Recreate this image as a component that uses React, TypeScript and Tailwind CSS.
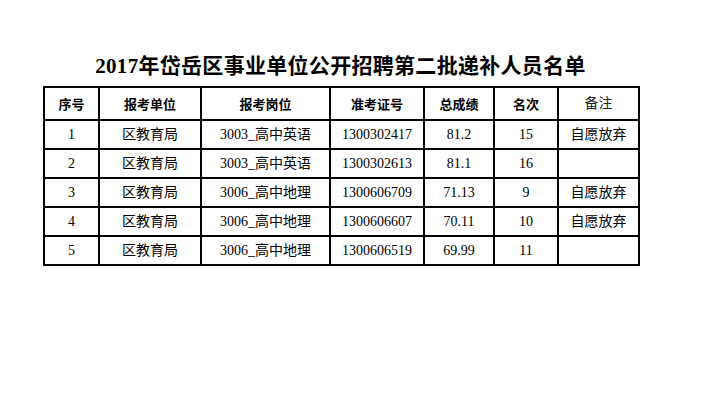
const rows = [
  ['1', '区教育局', '3003_高中英语', '1300302417', '81.2', '15', '自愿放弃'],
  ['2', '区教育局', '3003_高中英语', '1300302613', '81.1', '16', ''],
  ['3', '区教育局', '3006_高中地理', '1300606709', '71.13', '9', '自愿放弃'],
  ['4', '区教育局', '3006_高中地理', '1300606607', '70.11', '10', '自愿放弃'],
  ['5', '区教育局', '3006_高中地理', '1300606519', '69.99', '11', ''],
]

const widths = ['w-[55px]', 'w-[102px]', 'w-[129px]', 'w-[94px]', 'w-[70px]', 'w-[64px]', 'w-[81px]']
const heads = ['序号', '报考单位', '报考岗位', '准考证号', '总成绩', '名次']

export default function App() {
  return (
    <div className="w-[711px] h-[419px] bg-white text-black font-['Liberation_Serif','Noto_Sans_CJK_SC',serif]">
      <div className="w-[595px] ml-[43px] pt-[52px]">
        <h1 className="text-center text-[21px] font-bold leading-[28px] tracking-[0.3px] mb-[6px]">
          2017年岱岳区事业单位公开招聘第二批递补人员名单
        </h1>
        <table className="border-collapse table-fixed w-[595px] border-2 border-black">
          <colgroup>
            {widths.map((w, i) => (
              <col key={i} className={w} />
            ))}
          </colgroup>
          <thead>
            <tr className="h-[33px]">
              {heads.map((h) => (
                <th key={h} className="border-2 border-black text-[13px] font-bold font-['Noto_Sans_CJK_SC',sans-serif] p-0">
                  {h}
                </th>
              ))}
              <th className="border-2 border-black text-[14px] font-normal text-[#222] p-0">备注</th>
            </tr>
          </thead>
          <tbody>
            {rows.map((r) => (
              <tr key={r[0]} className="h-[29px]">
                {r.map((c, i) => (
                  <td key={i} className="border-2 border-black text-center text-[14px] leading-none p-0">
                    {c}
                  </td>
                ))}
              </tr>
            ))}
          </tbody>
        </table>
      </div>
    </div>
  )
}
